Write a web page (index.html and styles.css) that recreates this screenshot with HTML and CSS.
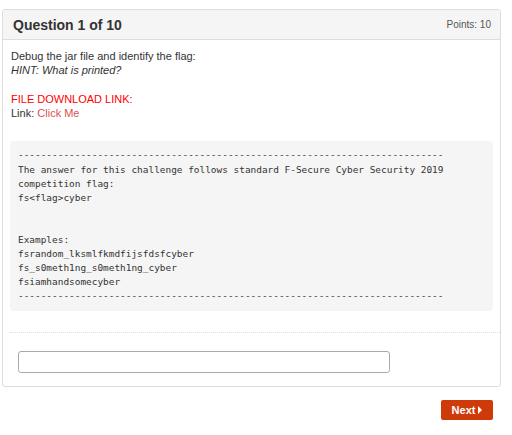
FILE: index.html
```html
<!DOCTYPE html>
<html>
<head>
<meta charset="utf-8">
<link rel="stylesheet" href="styles.css">
</head>
<body>
<div class="page">
  <div class="panel">
    <div class="panel-head">
      <h3 class="title">Question 1 of 10</h3>
      <span class="points">Points: 10</span>
    </div>
    <div class="panel-body">
      <p class="text">Debug the jar file and identify the flag:<br><em>HINT: What is printed?</em><br><br><span class="dl">FILE DOWNLOAD LINK:</span><br>Link: <a class="link" href="#">Click Me</a></p>
      <pre class="code">---------------------------------------------------------------------------
The answer for this challenge follows standard F-Secure Cyber Security 2019
competition flag:
fs&lt;flag&gt;cyber


Examples:
fsrandom_lksmlfkmdfijsfdsfcyber
fs_s0meth1ng_s0meth1ng_cyber
fsiamhandsomecyber
---------------------------------------------------------------------------</pre>
    </div>
    <div class="panel-foot">
      <input class="answer" type="text">
    </div>
  </div>
  <div class="actions">
    <button class="next">Next <span class="arrow"></span></button>
  </div>
</div>
</body>
</html>
```
FILE: styles.css
```css
html, body {
  margin: 0;
  padding: 0;
  background: #ffffff;
}
body {
  font-family: "Liberation Sans", Arial, sans-serif;
  color: #333;
}
.page {
  padding: 9px 11px 0 2px;
}
.panel {
  border: 1px solid #dddddd;
  border-radius: 3px;
  background: #fff;
}
.panel-head {
  height: 29px;
  display: flex;
  align-items: center;
  justify-content: space-between;
  padding: 0 9px 0 10px;
  background: #f5f5f5;
  border-bottom: 1px solid #dddddd;
  border-radius: 3px 3px 0 0;
}
.title {
  margin: 0;
  font-size: 14px;
  font-weight: bold;
  color: #333;
}
.points {
  font-size: 10px;
  color: #555;
}
.panel-body {
  padding: 9px 7px 0 7px;
}
.text {
  margin: 0;
  font-size: 11px;
  line-height: 14.3px;
  color: #333;
  padding-left: 1px;
}
.dl {
  color: #ff0000;
}
.link {
  color: #d9534f;
  text-decoration: none;
}
.code {
  margin: 21px 0 21px;
  padding: 7px 8px;
  background: #f5f5f5;
  border-radius: 4px;
  font-family: "DejaVu Sans Mono", monospace;
  font-size: 9.43px;
  line-height: 14.1px;
  color: #333;
  white-space: pre;
}
.panel-foot {
  margin-left: 7px;
  border-top: 1px dotted #dddddd;
  padding: 18px 0 13px 8px;
}
.answer {
  display: block;
  box-sizing: border-box;
  width: 372px;
  height: 22px;
  margin: 0;
  border: 1px solid #aaaaaa;
  border-radius: 3px;
  background: #fff;
}
.actions {
  display: flex;
  justify-content: flex-end;
  padding: 13px 8px 0 0;
}
.next {
  box-sizing: border-box;
  width: 52px;
  height: 20px;
  border: none;
  border-radius: 2px;
  background: #cf3a0b;
  color: #fff;
  font-family: "Liberation Sans", Arial, sans-serif;
  font-size: 11px;
  font-weight: bold;
  padding: 0;
  display: flex;
  align-items: center;
  justify-content: center;
  gap: 3px;
}
.arrow {
  width: 0;
  height: 0;
  border-top: 4px solid transparent;
  border-bottom: 4px solid transparent;
  border-left: 4px solid #fff;
}
```
